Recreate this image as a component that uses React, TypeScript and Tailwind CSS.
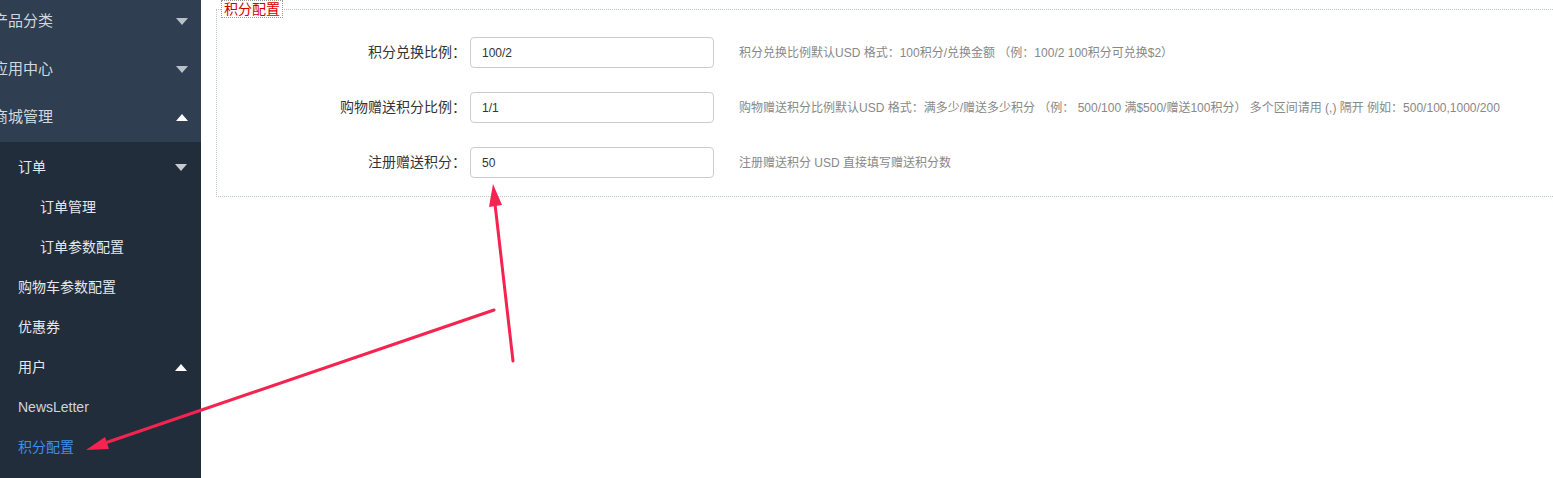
const font = { fontFamily: '"Liberation Sans", "Noto Sans CJK SC", sans-serif' }

function Caret({ up, className }: { up?: boolean; className: string }) {
  return (
    <svg width="12" height="7" viewBox="0 0 12 7" className={className}>
      {up ? <polygon points="0,7 12,7 6,0" fill="currentColor" /> : <polygon points="0,0 12,0 6,7" fill="currentColor" />}
    </svg>
  )
}

const topMenu = [
  { label: "产品分类", up: false },
  { label: "应用中心", up: false },
  { label: "商城管理", up: true },
]

const fields = [
  {
    label: "积分兑换比例：",
    value: "100/2",
    help: "积分兑换比例默认USD 格式：100积分/兑换金额 （例：100/2 100积分可兑换$2）",
  },
  {
    label: "购物赠送积分比例：",
    value: "1/1",
    help: "购物赠送积分比例默认USD 格式：满多少/赠送多少积分 （例： 500/100 满$500/赠送100积分） 多个区间请用 (,) 隔开 例如：500/100,1000/200",
  },
  {
    label: "注册赠送积分：",
    value: "50",
    help: "注册赠送积分 USD 直接填写赠送积分数",
  },
]

export default function App() {
  return (
    <div className="relative flex h-[478px] w-[1553px] overflow-hidden bg-white" style={font}>
      {/* Sidebar */}
      <aside className="flex w-[201px] shrink-0 flex-col bg-[#222d3c]">
        <div className="-mt-[3px] bg-[#2f3e51] pb-[1px]">
          {topMenu.map((m) => (
            <div key={m.label} className="flex h-[48px] items-center justify-between pr-[13px]">
              <span className="-ml-[7px] text-[15px] text-[#d2d8de]">{m.label}</span>
              <Caret up={m.up} className={m.up ? "text-white" : "text-[#b9c0c8]"} />
            </div>
          ))}
        </div>
        <div className="pt-[5px] text-[14px]">
          <div className="flex h-[40px] items-center justify-between pl-[18px] pr-[14px]">
            <span className="text-[#e4e8ec]">订单</span>
            <Caret className="text-[#c5cad0]" />
          </div>
          <div className="flex h-[40px] items-center pl-[40px] text-[#e4e8ec]">订单管理</div>
          <div className="flex h-[40px] items-center pl-[40px] text-[#e4e8ec]">订单参数配置</div>
          <div className="flex h-[40px] items-center pl-[18px] text-[#e4e8ec]">购物车参数配置</div>
          <div className="flex h-[40px] items-center pl-[18px] text-[#e4e8ec]">优惠券</div>
          <div className="flex h-[40px] items-center justify-between pl-[18px] pr-[14px]">
            <span className="text-[#e4e8ec]">用户</span>
            <Caret up className="text-white" />
          </div>
          <div className="flex h-[40px] items-center pl-[18px] text-[#d0d4d8]">NewsLetter</div>
          <div className="flex h-[40px] items-center pl-[18px] text-[#3d8fe8]">积分配置</div>
        </div>
      </aside>

      {/* Main */}
      <main className="min-w-0 flex-1 overflow-hidden pl-[15px]">
        <fieldset className="-mr-[20px] border border-dotted border-[#b9c4c8] px-0 pb-[18px] pt-[19px]">
          <legend className="ml-[4px] border border-dotted border-[#999] px-[2px] text-[14px] leading-[16px] text-[#d40000]">
            积分配置
          </legend>
          <div className="flex flex-col gap-[24px]">
            {fields.map((f) => (
              <div key={f.label} className="flex items-center">
                <label className="w-[249px] text-right text-[14px] text-[#333]">{f.label}</label>
                <input
                  readOnly
                  value={f.value}
                  className="ml-[4px] h-[31px] w-[244px] rounded-[4px] border border-[#ccc] px-[11px] text-[12px] text-[#333] outline-none"
                />
                <span className="ml-[25px] whitespace-nowrap text-[12px] text-[#888]">{f.help}</span>
              </div>
            ))}
          </div>
        </fieldset>
      </main>

      {/* Annotation arrows */}
      <svg className="pointer-events-none absolute left-0 top-0" width="1553" height="478">
        <g stroke="#f5234f" strokeWidth="3" strokeLinecap="round" fill="#f5234f">
          <line x1="513" y1="361" x2="495" y2="204" />
          <line x1="494" y1="310" x2="105" y2="443" />
        </g>
        <polygon points="493,184 502,205 489,207" fill="#f5234f" />
        <polygon points="86,450 109,449 105,437" fill="#f5234f" />
      </svg>
    </div>
  )
}
